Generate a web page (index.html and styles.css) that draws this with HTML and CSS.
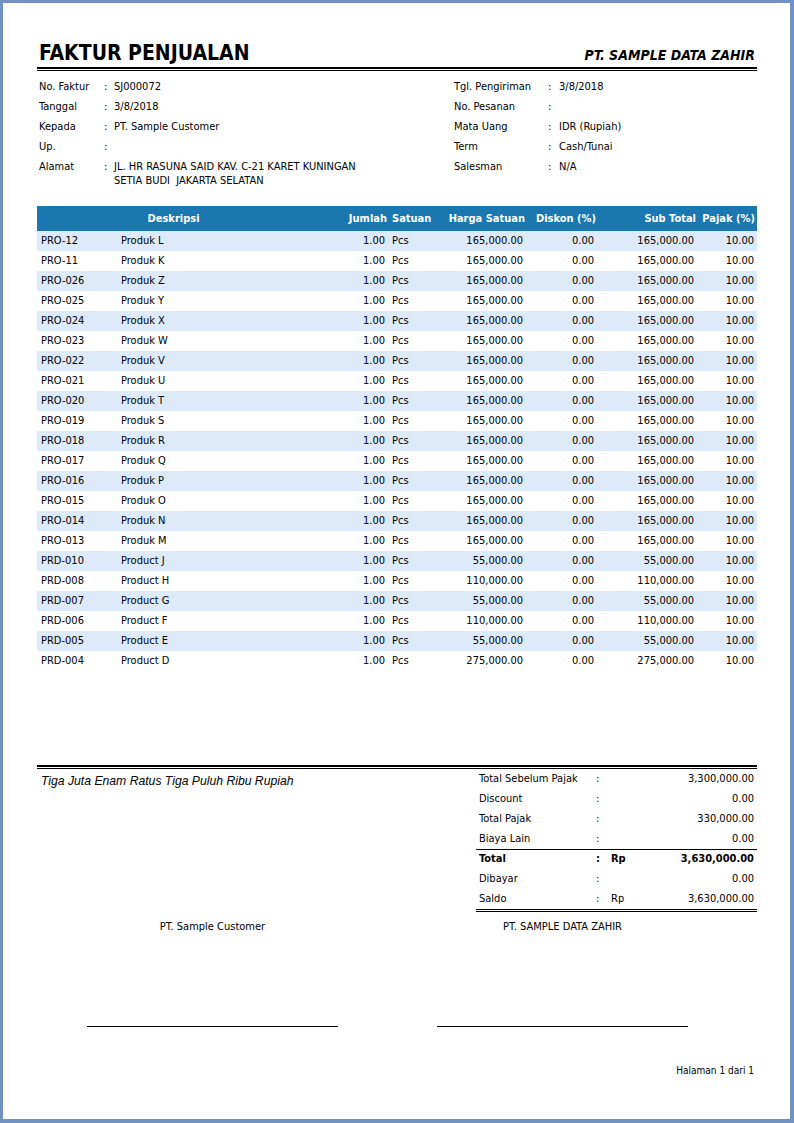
FILE: index.html
```html
<!DOCTYPE html>
<html lang="id">
<head>
<meta charset="utf-8">
<title>Faktur Penjualan</title>
<link rel="stylesheet" href="styles.css">
</head>
<body>
<div class="page">
  <div class="head">
    <h1 class="title">FAKTUR PENJUALAN</h1>
    <div class="company">PT. SAMPLE DATA ZAHIR</div>
  </div>
  <div class="rule"></div>

  <div class="info">
    <div class="info-col info-left">
      <div class="lbl">No. Faktur</div><div class="col">:</div><div class="val">SJ000072</div>
      <div class="lbl">Tanggal</div><div class="col">:</div><div class="val">3/8/2018</div>
      <div class="lbl">Kepada</div><div class="col">:</div><div class="val">PT. Sample Customer</div>
      <div class="lbl">Up.</div><div class="col">:</div><div class="val"></div>
      <div class="lbl">Alamat</div><div class="col">:</div><div class="val">JL. HR RASUNA SAID KAV. C-21 KARET KUNINGAN<br>SETIA BUDI&nbsp; JAKARTA SELATAN</div>
    </div>
    <div class="info-col info-right">
      <div class="lbl">Tgl. Pengiriman</div><div class="col">:</div><div class="val">3/8/2018</div>
      <div class="lbl">No. Pesanan</div><div class="col">:</div><div class="val"></div>
      <div class="lbl">Mata Uang</div><div class="col">:</div><div class="val">IDR (Rupiah)</div>
      <div class="lbl">Term</div><div class="col">:</div><div class="val">Cash/Tunai</div>
      <div class="lbl">Salesman</div><div class="col">:</div><div class="val">N/A</div>
    </div>
  </div>

  <table class="items">
    <colgroup>
      <col class="w-code"><col class="w-desc"><col class="w-qty"><col class="w-unit">
      <col class="w-price"><col class="w-disc"><col class="w-sub"><col class="w-tax">
    </colgroup>
    <thead>
      <tr>
        <th colspan="2" class="c">Deskripsi</th>
        <th class="r">Jumlah</th>
        <th class="l">Satuan</th>
        <th class="r">Harga Satuan</th>
        <th class="r">Diskon (%)</th>
        <th class="r">Sub Total</th>
        <th class="r">Pajak (%)</th>
      </tr>
    </thead>
    <tbody>
      <tr><td>PRO-12</td><td>Produk L</td><td class="r">1.00</td><td>Pcs</td><td class="r">165,000.00</td><td class="r">0.00</td><td class="r">165,000.00</td><td class="r">10.00</td></tr>
      <tr><td>PRO-11</td><td>Produk K</td><td class="r">1.00</td><td>Pcs</td><td class="r">165,000.00</td><td class="r">0.00</td><td class="r">165,000.00</td><td class="r">10.00</td></tr>
      <tr><td>PRO-026</td><td>Produk Z</td><td class="r">1.00</td><td>Pcs</td><td class="r">165,000.00</td><td class="r">0.00</td><td class="r">165,000.00</td><td class="r">10.00</td></tr>
      <tr><td>PRO-025</td><td>Produk Y</td><td class="r">1.00</td><td>Pcs</td><td class="r">165,000.00</td><td class="r">0.00</td><td class="r">165,000.00</td><td class="r">10.00</td></tr>
      <tr><td>PRO-024</td><td>Produk X</td><td class="r">1.00</td><td>Pcs</td><td class="r">165,000.00</td><td class="r">0.00</td><td class="r">165,000.00</td><td class="r">10.00</td></tr>
      <tr><td>PRO-023</td><td>Produk W</td><td class="r">1.00</td><td>Pcs</td><td class="r">165,000.00</td><td class="r">0.00</td><td class="r">165,000.00</td><td class="r">10.00</td></tr>
      <tr><td>PRO-022</td><td>Produk V</td><td class="r">1.00</td><td>Pcs</td><td class="r">165,000.00</td><td class="r">0.00</td><td class="r">165,000.00</td><td class="r">10.00</td></tr>
      <tr><td>PRO-021</td><td>Produk U</td><td class="r">1.00</td><td>Pcs</td><td class="r">165,000.00</td><td class="r">0.00</td><td class="r">165,000.00</td><td class="r">10.00</td></tr>
      <tr><td>PRO-020</td><td>Produk T</td><td class="r">1.00</td><td>Pcs</td><td class="r">165,000.00</td><td class="r">0.00</td><td class="r">165,000.00</td><td class="r">10.00</td></tr>
      <tr><td>PRO-019</td><td>Produk S</td><td class="r">1.00</td><td>Pcs</td><td class="r">165,000.00</td><td class="r">0.00</td><td class="r">165,000.00</td><td class="r">10.00</td></tr>
      <tr><td>PRO-018</td><td>Produk R</td><td class="r">1.00</td><td>Pcs</td><td class="r">165,000.00</td><td class="r">0.00</td><td class="r">165,000.00</td><td class="r">10.00</td></tr>
      <tr><td>PRO-017</td><td>Produk Q</td><td class="r">1.00</td><td>Pcs</td><td class="r">165,000.00</td><td class="r">0.00</td><td class="r">165,000.00</td><td class="r">10.00</td></tr>
      <tr><td>PRO-016</td><td>Produk P</td><td class="r">1.00</td><td>Pcs</td><td class="r">165,000.00</td><td class="r">0.00</td><td class="r">165,000.00</td><td class="r">10.00</td></tr>
      <tr><td>PRO-015</td><td>Produk O</td><td class="r">1.00</td><td>Pcs</td><td class="r">165,000.00</td><td class="r">0.00</td><td class="r">165,000.00</td><td class="r">10.00</td></tr>
      <tr><td>PRO-014</td><td>Produk N</td><td class="r">1.00</td><td>Pcs</td><td class="r">165,000.00</td><td class="r">0.00</td><td class="r">165,000.00</td><td class="r">10.00</td></tr>
      <tr><td>PRO-013</td><td>Produk M</td><td class="r">1.00</td><td>Pcs</td><td class="r">165,000.00</td><td class="r">0.00</td><td class="r">165,000.00</td><td class="r">10.00</td></tr>
      <tr><td>PRD-010</td><td>Product J</td><td class="r">1.00</td><td>Pcs</td><td class="r">55,000.00</td><td class="r">0.00</td><td class="r">55,000.00</td><td class="r">10.00</td></tr>
      <tr><td>PRD-008</td><td>Product H</td><td class="r">1.00</td><td>Pcs</td><td class="r">110,000.00</td><td class="r">0.00</td><td class="r">110,000.00</td><td class="r">10.00</td></tr>
      <tr><td>PRD-007</td><td>Product G</td><td class="r">1.00</td><td>Pcs</td><td class="r">55,000.00</td><td class="r">0.00</td><td class="r">55,000.00</td><td class="r">10.00</td></tr>
      <tr><td>PRD-006</td><td>Product F</td><td class="r">1.00</td><td>Pcs</td><td class="r">110,000.00</td><td class="r">0.00</td><td class="r">110,000.00</td><td class="r">10.00</td></tr>
      <tr><td>PRD-005</td><td>Product E</td><td class="r">1.00</td><td>Pcs</td><td class="r">55,000.00</td><td class="r">0.00</td><td class="r">55,000.00</td><td class="r">10.00</td></tr>
      <tr><td>PRD-004</td><td>Product D</td><td class="r">1.00</td><td>Pcs</td><td class="r">275,000.00</td><td class="r">0.00</td><td class="r">275,000.00</td><td class="r">10.00</td></tr>
    </tbody>
  </table>

  <div class="rule rule-foot"></div>

  <div class="summary">
    <div class="words">Tiga Juta Enam Ratus Tiga Puluh Ribu Rupiah</div>
    <div class="totals">
      <div class="trow"><span class="tl">Total Sebelum Pajak</span><span class="tc">:</span><span class="tr"></span><span class="ta">3,300,000.00</span></div>
      <div class="trow"><span class="tl">Discount</span><span class="tc">:</span><span class="tr"></span><span class="ta">0.00</span></div>
      <div class="trow"><span class="tl">Total Pajak</span><span class="tc">:</span><span class="tr"></span><span class="ta">330,000.00</span></div>
      <div class="trow"><span class="tl">Biaya Lain</span><span class="tc">:</span><span class="tr"></span><span class="ta">0.00</span></div>
      <div class="trow trow-total"><span class="tl">Total</span><span class="tc">:</span><span class="tr">Rp</span><span class="ta">3,630,000.00</span></div>
      <div class="trow"><span class="tl">Dibayar</span><span class="tc">:</span><span class="tr"></span><span class="ta">0.00</span></div>
      <div class="trow trow-last"><span class="tl">Saldo</span><span class="tc">:</span><span class="tr">Rp</span><span class="ta">3,630,000.00</span></div>
    </div>
  </div>

  <div class="signs">
    <div class="sign">
      <div class="sign-name">PT. Sample Customer</div>
      <div class="sign-line"></div>
    </div>
    <div class="sign">
      <div class="sign-name">PT. SAMPLE DATA ZAHIR</div>
      <div class="sign-line"></div>
    </div>
  </div>

  <div class="pager">Halaman 1 dari 1</div>
</div>
</body>
</html>
```

FILE: styles.css
```css
* { box-sizing: border-box; }

html, body {
  margin: 0;
  padding: 0;
  background: #ffffff;
}

body {
  font-family: "DejaVu Sans Condensed", "DejaVu Sans", sans-serif;
  font-size: 11px;
  color: #000;
}

.page {
  width: 794px;
  height: 1123px;
  border-style: solid;
  border-color: #7191c3;
  border-width: 3px 4px 4px 3px;
  padding: 39px 33px 0 34px;
  background: #fff;
}

/* Header */
.head {
  display: flex;
  justify-content: space-between;
  align-items: baseline;
  line-height: 23px;
}

.title {
  margin: 0 0 0 2px;
  font-size: 21px;
  font-weight: bold;
}

.company {
  font-size: 14px;
  font-weight: bold;
  font-style: italic;
  padding-right: 2px;
}

.rule {
  height: 4px;
  border-top: 2px solid #000;
  border-bottom: 1px solid #000;
}

/* Info block */
.info {
  display: flex;
  margin-top: 6px;
  padding-left: 2px;
}

.info-col {
  display: grid;
  align-content: start;
  line-height: 14px;
}

.info-col > div {
  padding: 3px 0;
  min-height: 20px;
}

.info-left {
  width: 415px;
  grid-template-columns: 65px 10px 1fr;
}

.info-right {
  flex: 1;
  grid-template-columns: 94px 11px 1fr;
}

/* Items table */
.items {
  width: 720px;
  margin-top: 15px;
  border-collapse: collapse;
  table-layout: fixed;
}

.w-code { width: 80px; }
.w-desc { width: 192px; }
.w-qty { width: 80px; }
.w-unit { width: 48px; }
.w-price { width: 90px; }
.w-disc { width: 71px; }
.w-sub { width: 100px; }
.w-tax { width: 59px; }

.items th {
  background: #1b77b0;
  color: #fff;
  font-weight: bold;
  height: 25px;
  padding: 0 2px 0 3px;
  white-space: nowrap;
}

.items td {
  height: 20px;
  padding: 0 4px;
  line-height: 14px;
  white-space: nowrap;
}

.items td:last-child { padding-right: 3px; }
.items td:nth-child(4) { padding-left: 3px; }

.items tbody tr:nth-child(odd) td {
  background: #dceaf9;
}

.items .c { text-align: center; }
.items .r { text-align: right; }
.items .l { text-align: left; }

/* Footer */
.rule-foot {
  margin-top: 94px;
}

.summary {
  display: flex;
  justify-content: space-between;
}

.words {
  padding: 5px 0 0 4px;
  font-family: "Liberation Sans", Arial, sans-serif;
  font-style: italic;
  font-size: 12.2px;
}

.totals {
  width: 281px;
  border-bottom: 3px double #000;
}

.trow {
  display: grid;
  grid-template-columns: 117px 15px 1fr auto;
  height: 20px;
  line-height: 20px;
  padding: 0 3px;
}

.trow-total {
  border-top: 1px solid #000;
  line-height: 18px;
  font-weight: bold;
}

.ta { text-align: right; }

/* Signatures */
.signs {
  display: flex;
  gap: 99px;
  padding-left: 50px;
  margin-top: 8px;
}

.sign {
  width: 251px;
}

.sign-name {
  text-align: center;
  line-height: 14px;
}

.sign-line {
  margin-top: 92px;
  border-top: 1px solid #000;
}

.pager {
  margin-top: 37px;
  text-align: right;
  font-size: 10px;
  line-height: 14px;
  padding-right: 3px;
}
```
